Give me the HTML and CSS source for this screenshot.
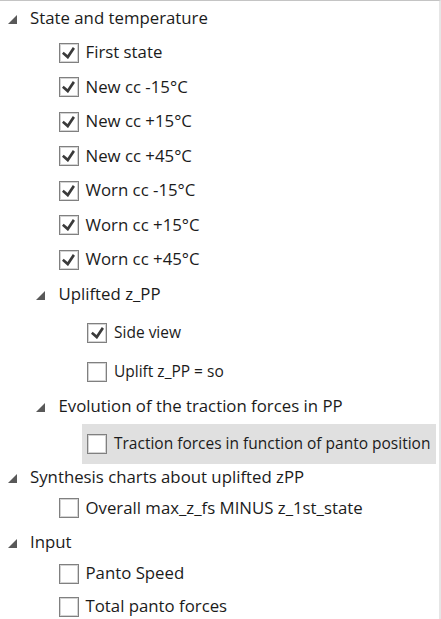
FILE: index.html
```html
<!DOCTYPE html>
<html>
<head>
<meta charset="utf-8">
<link rel="stylesheet" href="styles.css">
</head>
<body>
<div class="tree">
  <div class="row indent-0"><span class="toggle"><svg class="arrow" viewBox="0 0 9 9"><path d="M9 0 L9 9 L0 9 Z"/></svg></span><span class="label">State and temperature</span></div>
  <div class="row indent-1"><span class="toggle"></span><span class="cb"><svg class="check" viewBox="0 0 10 9.1"><path d="M9.975 1.223 L4.698 9.098 L4.522 9.098 L0 5.193 L1.277 3.522 L4.255 6.088 L8.333 0 Z"/></svg></span><span class="label">First state</span></div>
  <div class="row indent-1"><span class="toggle"></span><span class="cb"><svg class="check" viewBox="0 0 10 9.1"><path d="M9.975 1.223 L4.698 9.098 L4.522 9.098 L0 5.193 L1.277 3.522 L4.255 6.088 L8.333 0 Z"/></svg></span><span class="label">New cc -15°C</span></div>
  <div class="row indent-1"><span class="toggle"></span><span class="cb"><svg class="check" viewBox="0 0 10 9.1"><path d="M9.975 1.223 L4.698 9.098 L4.522 9.098 L0 5.193 L1.277 3.522 L4.255 6.088 L8.333 0 Z"/></svg></span><span class="label">New cc +15°C</span></div>
  <div class="row indent-1"><span class="toggle"></span><span class="cb"><svg class="check" viewBox="0 0 10 9.1"><path d="M9.975 1.223 L4.698 9.098 L4.522 9.098 L0 5.193 L1.277 3.522 L4.255 6.088 L8.333 0 Z"/></svg></span><span class="label">New cc +45°C</span></div>
  <div class="row indent-1"><span class="toggle"></span><span class="cb"><svg class="check" viewBox="0 0 10 9.1"><path d="M9.975 1.223 L4.698 9.098 L4.522 9.098 L0 5.193 L1.277 3.522 L4.255 6.088 L8.333 0 Z"/></svg></span><span class="label">Worn cc -15°C</span></div>
  <div class="row indent-1"><span class="toggle"></span><span class="cb"><svg class="check" viewBox="0 0 10 9.1"><path d="M9.975 1.223 L4.698 9.098 L4.522 9.098 L0 5.193 L1.277 3.522 L4.255 6.088 L8.333 0 Z"/></svg></span><span class="label">Worn cc +15°C</span></div>
  <div class="row indent-1"><span class="toggle"></span><span class="cb"><svg class="check" viewBox="0 0 10 9.1"><path d="M9.975 1.223 L4.698 9.098 L4.522 9.098 L0 5.193 L1.277 3.522 L4.255 6.088 L8.333 0 Z"/></svg></span><span class="label">Worn cc +45°C</span></div>
  <div class="row indent-1"><span class="toggle"><svg class="arrow" viewBox="0 0 9 9"><path d="M9 0 L9 9 L0 9 Z"/></svg></span><span class="label">Uplifted z_PP</span></div>
  <div class="row indent-2 gap-wide"><span class="toggle"></span><span class="cb"><svg class="check" viewBox="0 0 10 9.1"><path d="M9.975 1.223 L4.698 9.098 L4.522 9.098 L0 5.193 L1.277 3.522 L4.255 6.088 L8.333 0 Z"/></svg></span><span class="label small">Side view</span></div>
  <div class="row indent-2 gap-wider"><span class="toggle"></span><span class="cb"></span><span class="label small">Uplift z_PP = so</span></div>
  <div class="row indent-1"><span class="toggle"><svg class="arrow" viewBox="0 0 9 9"><path d="M9 0 L9 9 L0 9 Z"/></svg></span><span class="label">Evolution of the traction forces in PP</span></div>
  <div class="row indent-2 row-selected"><span class="toggle"></span><span class="selection"><span class="cb"></span><span class="label small">Traction forces in function of panto position</span></span></div>
  <div class="row indent-0 gap-after-sel"><span class="toggle"><svg class="arrow" viewBox="0 0 9 9"><path d="M9 0 L9 9 L0 9 Z"/></svg></span><span class="label">Synthesis charts about uplifted zPP</span></div>
  <div class="row indent-1 gap-tight"><span class="toggle"></span><span class="cb"></span><span class="label">Overall max_z_fs MINUS z_1st_state</span></div>
  <div class="row indent-0"><span class="toggle"><svg class="arrow" viewBox="0 0 9 9"><path d="M9 0 L9 9 L0 9 Z"/></svg></span><span class="label">Input</span></div>
  <div class="row indent-1 gap-tight2"><span class="toggle"></span><span class="cb"></span><span class="label">Panto Speed</span></div>
  <div class="row indent-1 gap-tight3"><span class="toggle"></span><span class="cb"></span><span class="label">Total panto forces</span></div>
</div>
</body>
</html>
```

FILE: styles.css
```css
html, body {
  margin: 0;
  padding: 0;
  background: #ffffff;
}

body {
  width: 441px;
  height: 619px;
  overflow: hidden;
}

.tree {
  box-sizing: border-box;
  width: 441px;
  height: 619px;
  border-top: 1px solid #c4c4c4;
  border-right: 2px solid #e6e6e6;
  background: #ffffff;
  font-family: "Open Sans", "Noto Sans", "Liberation Sans", sans-serif;
  font-size: 16.8px;
  color: #1b1b1b;
  overflow: hidden;
}

.row {
  display: flex;
  align-items: center;
  height: 34.5px;
  white-space: nowrap;
}

.indent-0 { padding-left: 1.5px; }
.indent-1 { padding-left: 30px; }
.indent-2 { padding-left: 58.5px; }

.toggle {
  flex: 0 0 28.5px;
  width: 28.5px;
  height: 100%;
  display: flex;
  align-items: center;
}

.arrow {
  width: 9px;
  height: 9px;
  margin-left: 6px;
  margin-top: 2px;
  fill: #595959;
}

.cb {
  box-sizing: border-box;
  flex: 0 0 20px;
  width: 20px;
  height: 20px;
  border: 1px solid #808080;
  box-shadow: inset 0 0 0 1px #d4d4d4;
  background: #ffffff;
  display: flex;
  align-items: center;
  justify-content: center;
  margin-right: 7px;
}

.check {
  width: 13px;
  height: 12px;
  fill: #3a3a3a;
}

.label {
  line-height: 20px;
  padding-bottom: 1px;
}

.label.small {
  font-size: 15.5px;
}

.gap-wide { margin-top: 4px; }
.gap-wider { margin-top: 4.5px; }

.row-selected {
  height: 40px;
}

.selection {
  display: flex;
  align-items: center;
  height: 100%;
  flex: 1;
  margin-left: -5px;
  padding-left: 5px;
  margin-right: 3px;
  background: #e0e0e0;
  overflow: hidden;
}

.gap-after-sel { margin-top: -3.25px; }
.gap-tight { margin-top: -4px; }
.gap-tight2 { margin-top: -3.5px; }
.gap-tight3 { margin-top: -1.5px; }
```
